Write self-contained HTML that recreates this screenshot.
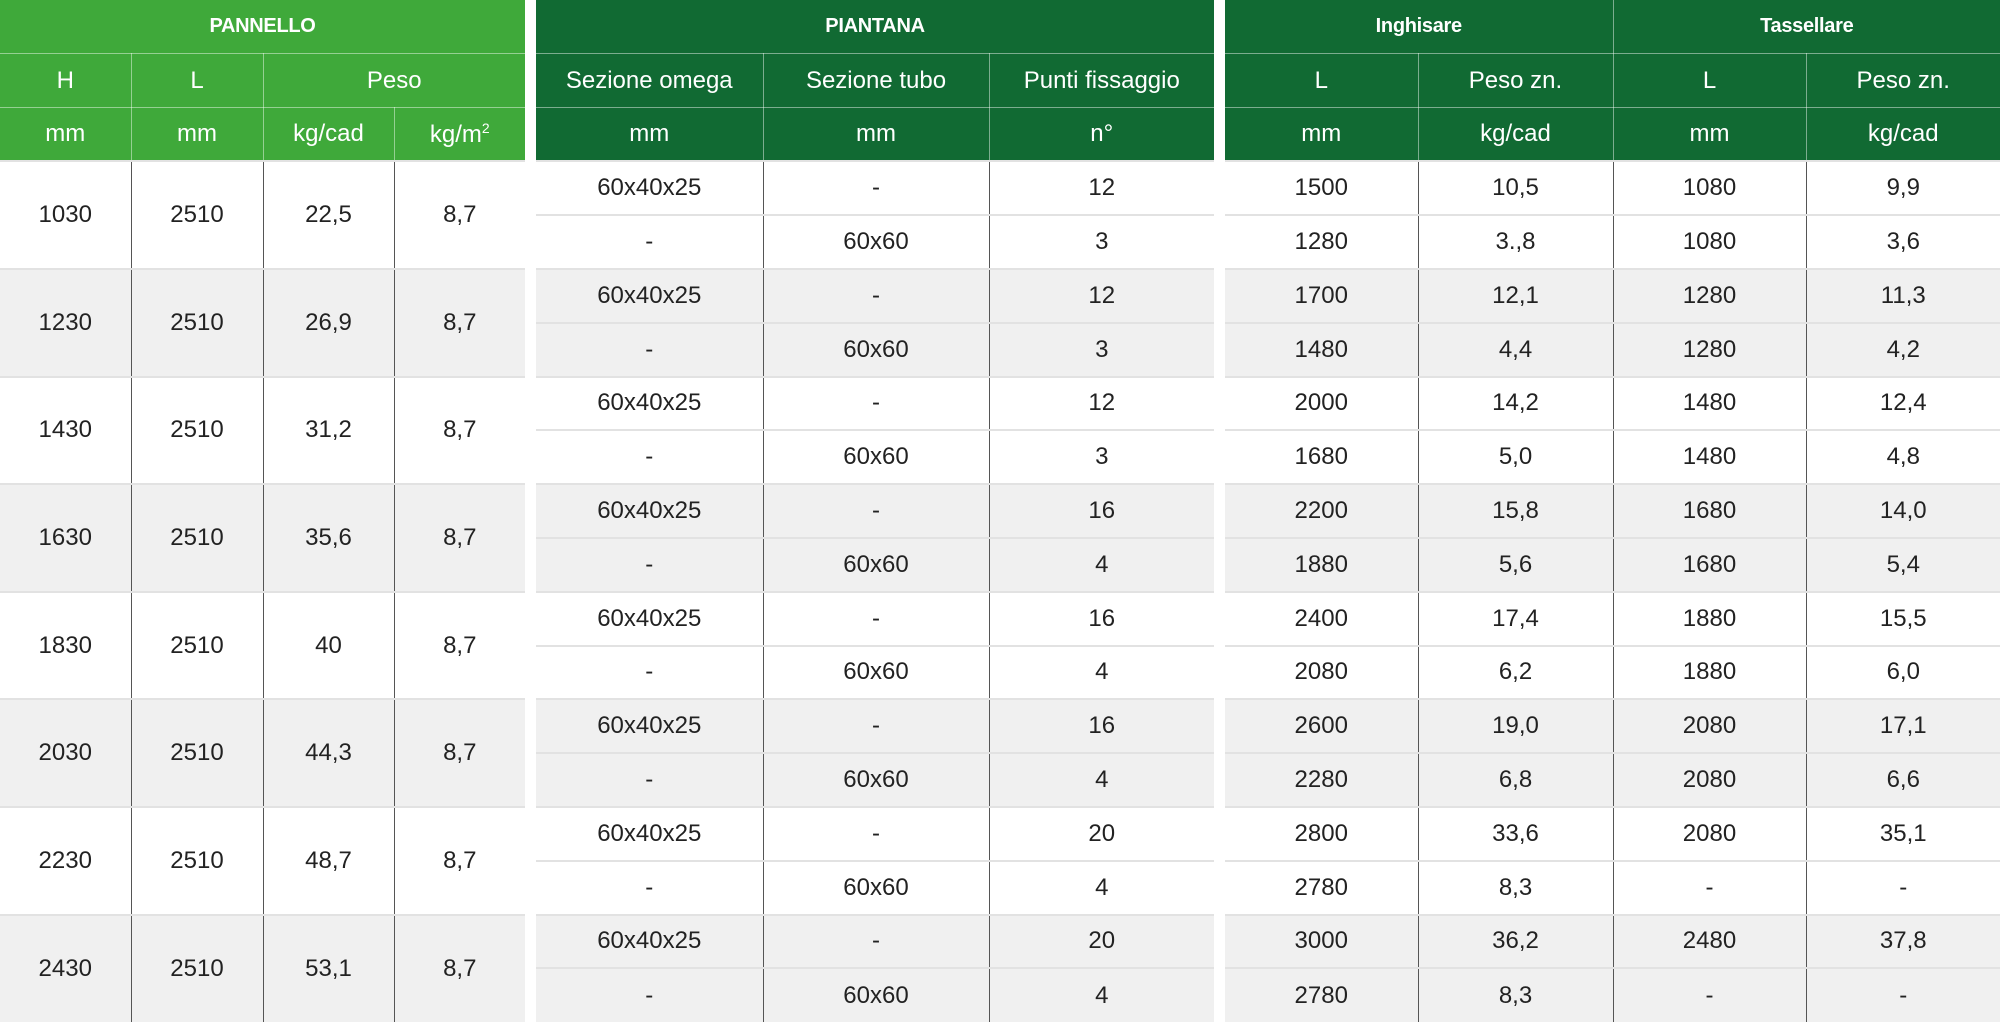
<!DOCTYPE html>
<html><head><meta charset="utf-8"><style>
body{margin:0;width:2000px;height:1022px;background:#fff;overflow:hidden;font-family:"Liberation Sans",sans-serif;position:relative}
table{position:absolute;top:0;border-collapse:collapse;table-layout:fixed;color:#222}
td{height:53.8px;padding:0;text-align:center;vertical-align:middle;font-size:24px;box-sizing:border-box}
tr.p td{height:107.6px}
tr.h td{color:#fff;font-size:24px;border:1.5px solid rgba(255,255,255,0.45)}
tr.t td{font-weight:bold;font-size:20px;letter-spacing:-0.3px}
.lg td{background:#3fa93a}
.dg td{background:#116a33}
tr.h td:first-child{border-left:none}
tr.h td:last-child{border-right:none}
tr.t td{border-top:none}
td.v{border-left:1px solid #555}
td.v:first-child{border-left:none}
.g td{background:#f0f0f0}
tr.d td{border-top:2px solid #e2e2e2}
</style></head><body>

<table style="left:0;width:525px">
<colgroup><col style="width:131px"><col style="width:132px"><col style="width:131px"><col style="width:131px"></colgroup>
<tr class="h t lg"><td colspan="4">PANNELLO</td></tr>
<tr class="h lg"><td>H</td><td>L</td><td colspan="2">Peso</td></tr>
<tr class="h lg"><td>mm</td><td>mm</td><td>kg/cad</td><td>kg/m<sup style="font-size:14px">2</sup></td></tr>
<tr class="d p"><td class="v">1030</td><td class="v">2510</td><td class="v">22,5</td><td class="v">8,7</td></tr>
<tr class="d p g"><td class="v">1230</td><td class="v">2510</td><td class="v">26,9</td><td class="v">8,7</td></tr>
<tr class="d p"><td class="v">1430</td><td class="v">2510</td><td class="v">31,2</td><td class="v">8,7</td></tr>
<tr class="d p g"><td class="v">1630</td><td class="v">2510</td><td class="v">35,6</td><td class="v">8,7</td></tr>
<tr class="d p"><td class="v">1830</td><td class="v">2510</td><td class="v">40</td><td class="v">8,7</td></tr>
<tr class="d p g"><td class="v">2030</td><td class="v">2510</td><td class="v">44,3</td><td class="v">8,7</td></tr>
<tr class="d p"><td class="v">2230</td><td class="v">2510</td><td class="v">48,7</td><td class="v">8,7</td></tr>
<tr class="d p g"><td class="v">2430</td><td class="v">2510</td><td class="v">53,1</td><td class="v">8,7</td></tr>
</table>

<table style="left:536px;width:678px">
<colgroup><col style="width:227px"><col style="width:226px"><col style="width:225px"></colgroup>
<tr class="h t dg"><td colspan="3">PIANTANA</td></tr>
<tr class="h dg"><td>Sezione omega</td><td>Sezione tubo</td><td>Punti fissaggio</td></tr>
<tr class="h dg"><td>mm</td><td>mm</td><td>n°</td></tr>
<tr class="d"><td class="v">60x40x25</td><td class="v">-</td><td class="v">12</td></tr>
<tr class="d"><td class="v">-</td><td class="v">60x60</td><td class="v">3</td></tr>
<tr class="d g"><td class="v">60x40x25</td><td class="v">-</td><td class="v">12</td></tr>
<tr class="d g"><td class="v">-</td><td class="v">60x60</td><td class="v">3</td></tr>
<tr class="d"><td class="v">60x40x25</td><td class="v">-</td><td class="v">12</td></tr>
<tr class="d"><td class="v">-</td><td class="v">60x60</td><td class="v">3</td></tr>
<tr class="d g"><td class="v">60x40x25</td><td class="v">-</td><td class="v">16</td></tr>
<tr class="d g"><td class="v">-</td><td class="v">60x60</td><td class="v">4</td></tr>
<tr class="d"><td class="v">60x40x25</td><td class="v">-</td><td class="v">16</td></tr>
<tr class="d"><td class="v">-</td><td class="v">60x60</td><td class="v">4</td></tr>
<tr class="d g"><td class="v">60x40x25</td><td class="v">-</td><td class="v">16</td></tr>
<tr class="d g"><td class="v">-</td><td class="v">60x60</td><td class="v">4</td></tr>
<tr class="d"><td class="v">60x40x25</td><td class="v">-</td><td class="v">20</td></tr>
<tr class="d"><td class="v">-</td><td class="v">60x60</td><td class="v">4</td></tr>
<tr class="d g"><td class="v">60x40x25</td><td class="v">-</td><td class="v">20</td></tr>
<tr class="d g"><td class="v">-</td><td class="v">60x60</td><td class="v">4</td></tr>
</table>

<table style="left:1225px;width:775px">
<colgroup><col style="width:193px"><col style="width:195px"><col style="width:193px"><col style="width:194px"></colgroup>
<tr class="h t dg"><td colspan="2">Inghisare</td><td colspan="2">Tassellare</td></tr>
<tr class="h dg"><td>L</td><td>Peso zn.</td><td>L</td><td>Peso zn.</td></tr>
<tr class="h dg"><td>mm</td><td>kg/cad</td><td>mm</td><td>kg/cad</td></tr>
<tr class="d"><td class="v">1500</td><td class="v">10,5</td><td class="v">1080</td><td class="v">9,9</td></tr>
<tr class="d"><td class="v">1280</td><td class="v">3.,8</td><td class="v">1080</td><td class="v">3,6</td></tr>
<tr class="d g"><td class="v">1700</td><td class="v">12,1</td><td class="v">1280</td><td class="v">11,3</td></tr>
<tr class="d g"><td class="v">1480</td><td class="v">4,4</td><td class="v">1280</td><td class="v">4,2</td></tr>
<tr class="d"><td class="v">2000</td><td class="v">14,2</td><td class="v">1480</td><td class="v">12,4</td></tr>
<tr class="d"><td class="v">1680</td><td class="v">5,0</td><td class="v">1480</td><td class="v">4,8</td></tr>
<tr class="d g"><td class="v">2200</td><td class="v">15,8</td><td class="v">1680</td><td class="v">14,0</td></tr>
<tr class="d g"><td class="v">1880</td><td class="v">5,6</td><td class="v">1680</td><td class="v">5,4</td></tr>
<tr class="d"><td class="v">2400</td><td class="v">17,4</td><td class="v">1880</td><td class="v">15,5</td></tr>
<tr class="d"><td class="v">2080</td><td class="v">6,2</td><td class="v">1880</td><td class="v">6,0</td></tr>
<tr class="d g"><td class="v">2600</td><td class="v">19,0</td><td class="v">2080</td><td class="v">17,1</td></tr>
<tr class="d g"><td class="v">2280</td><td class="v">6,8</td><td class="v">2080</td><td class="v">6,6</td></tr>
<tr class="d"><td class="v">2800</td><td class="v">33,6</td><td class="v">2080</td><td class="v">35,1</td></tr>
<tr class="d"><td class="v">2780</td><td class="v">8,3</td><td class="v">-</td><td class="v">-</td></tr>
<tr class="d g"><td class="v">3000</td><td class="v">36,2</td><td class="v">2480</td><td class="v">37,8</td></tr>
<tr class="d g"><td class="v">2780</td><td class="v">8,3</td><td class="v">-</td><td class="v">-</td></tr>
</table>
</body></html>
